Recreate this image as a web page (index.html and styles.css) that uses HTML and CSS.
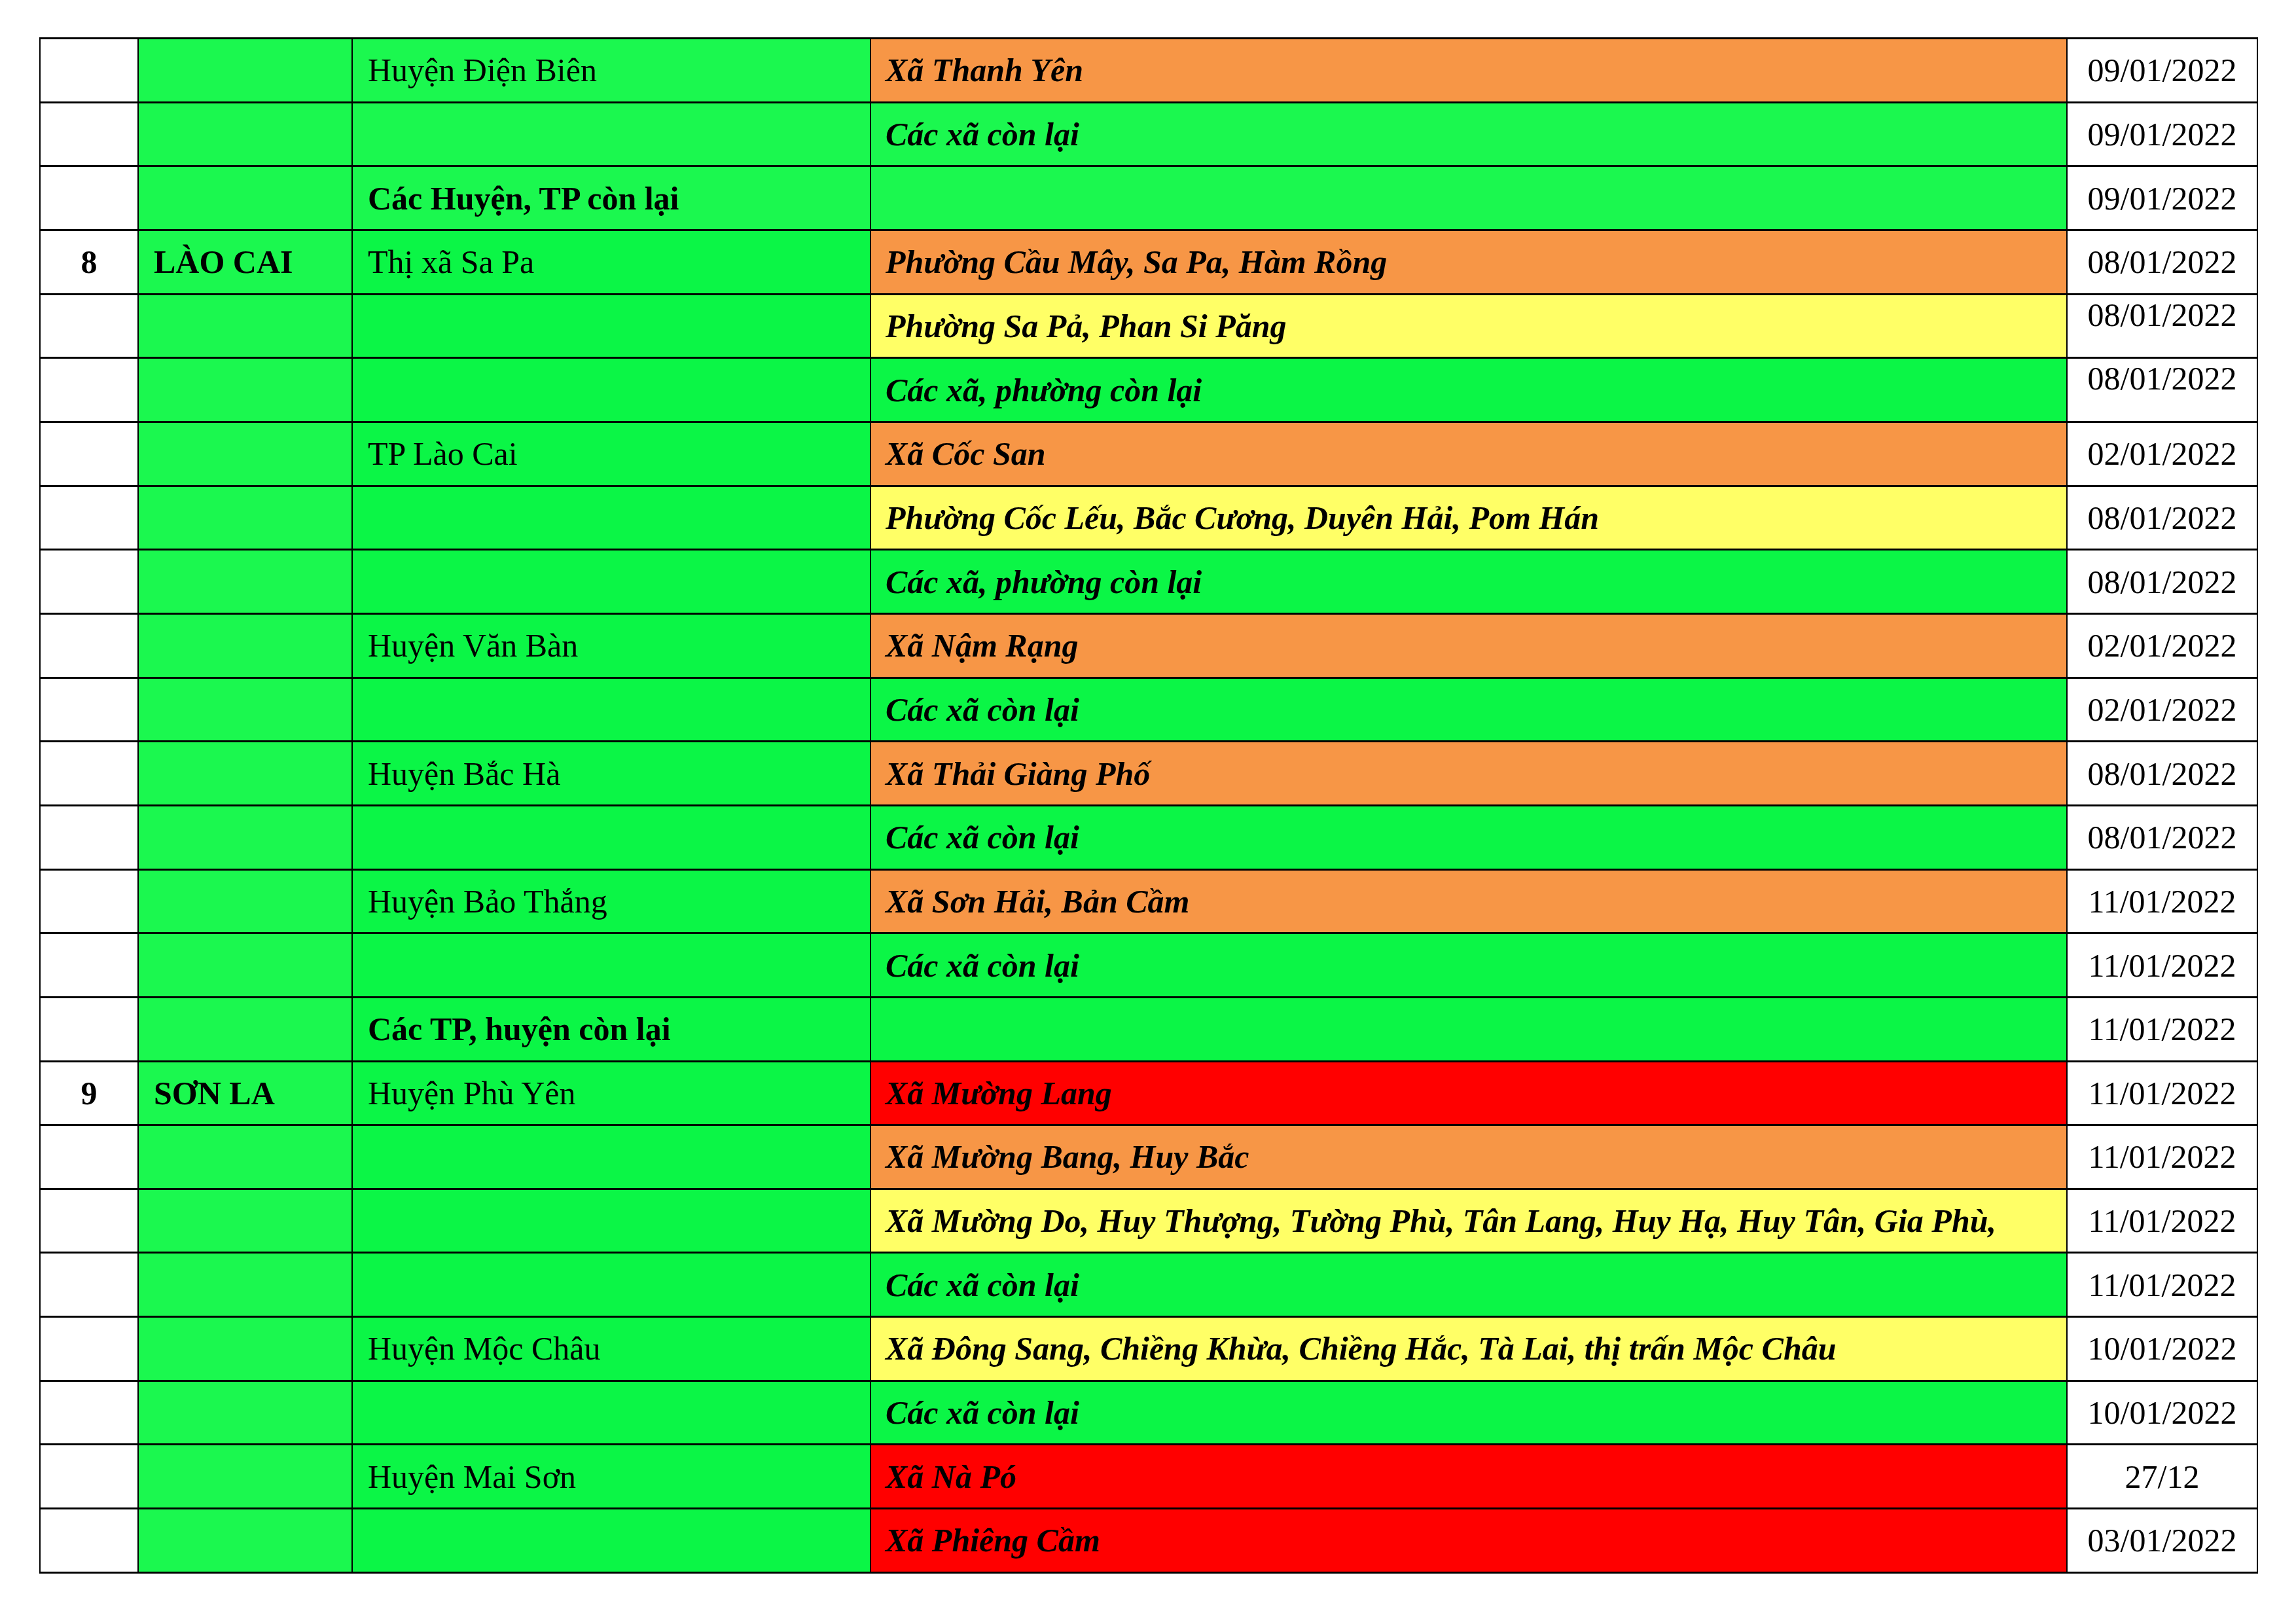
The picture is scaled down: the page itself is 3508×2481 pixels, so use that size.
FILE: index.html
```html
<!DOCTYPE html>
<html lang="vi">
<head>
<meta charset="utf-8">
<title>Bảng cấp độ dịch</title>
<link rel="stylesheet" href="styles.css">
</head>
<body>
<div class="page">
<table class="grid">
<colgroup>
<col class="c-no"><col class="c-prov"><col class="c-dist"><col class="c-com"><col class="c-date">
</colgroup>
<tbody>
<tr><td class="no"></td><td class="prov"></td><td class="dist lg">Huyện Điện Biên</td><td class="com orange">Xã Thanh Yên</td><td class="date">09/01/2022</td></tr>
<tr><td class="no"></td><td class="prov"></td><td class="dist lg"></td><td class="com lg">Các xã còn lại</td><td class="date">09/01/2022</td></tr>
<tr><td class="no"></td><td class="prov"></td><td class="dist lg b">Các Huyện, TP còn lại</td><td class="com lg"></td><td class="date">09/01/2022</td></tr>
<tr><td class="no">8</td><td class="prov">LÀO CAI</td><td class="dist">Thị xã Sa Pa</td><td class="com orange">Phường Cầu Mây, Sa Pa, Hàm Rồng</td><td class="date">08/01/2022</td></tr>
<tr><td class="no"></td><td class="prov"></td><td class="dist"></td><td class="com yellow">Phường Sa Pả, Phan Si Păng</td><td class="date top">08/01/2022</td></tr>
<tr><td class="no"></td><td class="prov"></td><td class="dist"></td><td class="com">Các xã, phường còn lại</td><td class="date top">08/01/2022</td></tr>
<tr><td class="no"></td><td class="prov"></td><td class="dist">TP Lào Cai</td><td class="com orange">Xã Cốc San</td><td class="date">02/01/2022</td></tr>
<tr><td class="no"></td><td class="prov"></td><td class="dist"></td><td class="com yellow">Phường Cốc Lếu, Bắc Cương, Duyên Hải, Pom Hán</td><td class="date">08/01/2022</td></tr>
<tr><td class="no"></td><td class="prov"></td><td class="dist"></td><td class="com">Các xã, phường còn lại</td><td class="date">08/01/2022</td></tr>
<tr><td class="no"></td><td class="prov"></td><td class="dist">Huyện Văn Bàn</td><td class="com orange">Xã Nậm Rạng</td><td class="date">02/01/2022</td></tr>
<tr><td class="no"></td><td class="prov"></td><td class="dist"></td><td class="com">Các xã còn lại</td><td class="date">02/01/2022</td></tr>
<tr><td class="no"></td><td class="prov"></td><td class="dist">Huyện Bắc Hà</td><td class="com orange">Xã Thải Giàng Phố</td><td class="date">08/01/2022</td></tr>
<tr><td class="no"></td><td class="prov"></td><td class="dist"></td><td class="com">Các xã còn lại</td><td class="date">08/01/2022</td></tr>
<tr><td class="no"></td><td class="prov"></td><td class="dist">Huyện Bảo Thắng</td><td class="com orange">Xã Sơn Hải, Bản Cầm</td><td class="date">11/01/2022</td></tr>
<tr><td class="no"></td><td class="prov"></td><td class="dist"></td><td class="com">Các xã còn lại</td><td class="date">11/01/2022</td></tr>
<tr><td class="no"></td><td class="prov"></td><td class="dist b">Các TP, huyện còn lại</td><td class="com"></td><td class="date">11/01/2022</td></tr>
<tr><td class="no">9</td><td class="prov">SƠN LA</td><td class="dist">Huyện Phù Yên</td><td class="com red">Xã Mường Lang</td><td class="date">11/01/2022</td></tr>
<tr><td class="no"></td><td class="prov"></td><td class="dist"></td><td class="com orange">Xã Mường Bang, Huy Bắc</td><td class="date">11/01/2022</td></tr>
<tr><td class="no"></td><td class="prov"></td><td class="dist"></td><td class="com yellow">Xã Mường Do, Huy Thượng, Tường Phù, Tân Lang, Huy Hạ, Huy Tân, Gia Phù,</td><td class="date">11/01/2022</td></tr>
<tr><td class="no"></td><td class="prov"></td><td class="dist"></td><td class="com">Các xã còn lại</td><td class="date">11/01/2022</td></tr>
<tr><td class="no"></td><td class="prov"></td><td class="dist">Huyện Mộc Châu</td><td class="com yellow">Xã Đông Sang, Chiềng Khừa, Chiềng Hắc, Tà Lai, thị trấn Mộc Châu</td><td class="date">10/01/2022</td></tr>
<tr><td class="no"></td><td class="prov"></td><td class="dist"></td><td class="com">Các xã còn lại</td><td class="date">10/01/2022</td></tr>
<tr><td class="no"></td><td class="prov"></td><td class="dist">Huyện Mai Sơn</td><td class="com red">Xã Nà Pó</td><td class="date">27/12</td></tr>
<tr><td class="no"></td><td class="prov"></td><td class="dist"></td><td class="com red">Xã Phiêng Cầm</td><td class="date">03/01/2022</td></tr>
</tbody>
</table>
</div>
</body>
</html>
```
FILE: styles.css
```css
html, body {
  margin: 0;
  padding: 0;
  background: #ffffff;
}
.page {
  padding: 57px 0 0 60px;
}
.grid {
  border-collapse: collapse;
  table-layout: fixed;
  width: 3388px;
  font-family: "Liberation Serif", "Times New Roman", serif;
  font-size: 50px;
  color: #000;
  border-top: 3px solid #000;
  border-bottom: 3px solid #000;
  border-left: 2px solid #000;
  border-right: 2px solid #000;
}
.c-no { width: 150px; }
.c-prov { width: 327px; }
.c-dist { width: 792px; }
.c-com { width: 1828px; }
.c-date { width: 291px; }
.grid tr {
  height: 97.67px;
}
.grid td {
  border-top: 3px solid #000;
  border-bottom: 3px solid #000;
  border-left: 2px solid #000;
  border-right: 2px solid #000;
  padding: 0 0 0 23px;
  vertical-align: middle;
  white-space: nowrap;
  overflow: hidden;
  line-height: normal;
}
.grid td.no {
  background: #ffffff;
  text-align: center;
  font-weight: bold;
  padding: 0;
}
.grid td.prov {
  background: #1bf84f;
  font-weight: bold;
}
.grid td.dist {
  background: #0bf646;
}
.grid td.com {
  background: #0bf646;
  font-weight: bold;
  font-style: italic;
  padding-left: 22px;
}
.grid td.lg { background: #1bf84f; }
.grid td.orange { background: #f79646; }
.grid td.yellow { background: #ffff66; }
.grid td.red { background: #ff0000; }
.grid td.b { font-weight: bold; }
.grid td.date {
  background: #ffffff;
  text-align: center;
  padding: 0;
}
.grid td.date.top {
  vertical-align: top;
  padding-top: 1px;
}
```
